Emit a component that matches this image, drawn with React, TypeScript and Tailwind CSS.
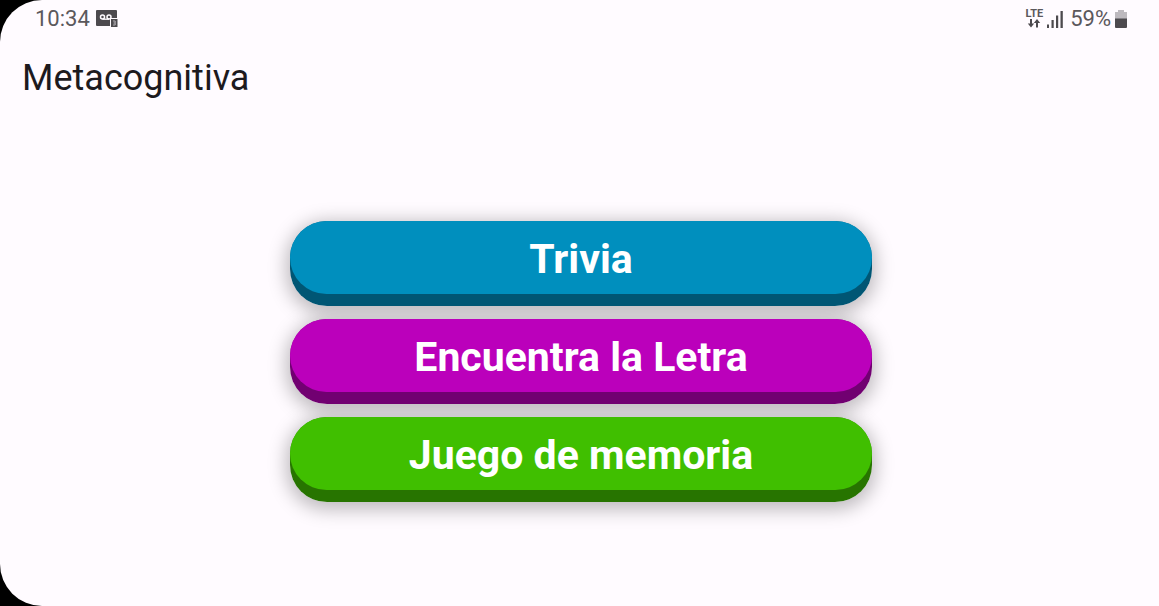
import React from 'react';

const games = [
  { name: 'Trivia', face: 'bg-[#008fbe]', edge: 'bg-[#005674]' },
  { name: 'Encuentra la Letra', face: 'bg-[#bb00bb]', edge: 'bg-[#710071]' },
  { name: 'Juego de memoria', face: 'bg-[#40bf00]', edge: 'bg-[#277400]' },
];

const VoicemailIcon = () => (
  <svg width="22" height="19" viewBox="0 0 22 19" aria-hidden="true">
    <path d="M1 1h19a1 1 0 0 1 1 1v7h-5v8H1a1 1 0 0 1-1-1V2a1 1 0 0 1 1-1z" fill="#4d4a4e" />
    <circle cx="6.500" cy="8" r="2" fill="none" stroke="#fffbff" strokeWidth="1.500" />
    <circle cx="13" cy="8" r="2" fill="none" stroke="#fffbff" strokeWidth="1.500" />
    <path d="M6.500 10.200h6.500" stroke="#fffbff" strokeWidth="1.300" />
    <path d="M14 9h8v10h-8z" fill="#fffbff" />
    <path d="M15 10h6.500v8H15z" fill="#4d4a4e" />
    <path d="M17 12h2.200v4H17M17.500 14h1.500" fill="none" stroke="#bdb9be" strokeWidth="0.900" />
  </svg>
);

const DataArrows = () => (
  <svg width="14" height="9" viewBox="0 0 14 9" fill="#4d4a4e" aria-hidden="true">
    <path d="M3 0h2v4.500h2.200L4 8.500 0.800 4.500H3z" />
    <path d="M9 8.500h2V4h2.200L10 0 6.800 4H9z" />
  </svg>
);

const SignalIcon = () => (
  <svg width="17" height="18" viewBox="0 0 17 18" fill="#4d4a4e" aria-hidden="true">
    <rect x="0" y="14.500" width="2" height="3.500" />
    <rect x="4.500" y="10" width="2.200" height="8" />
    <rect x="9" y="5.500" width="2.200" height="12.500" />
    <rect x="13.500" y="1" width="2.300" height="17" />
  </svg>
);

const BatteryIcon = () => (
  <svg width="12" height="18" viewBox="0 0 12 18" aria-hidden="true">
    <path d="M3 0h6v2h3v7H0V2h3z" fill="#bdb9be" />
    <path d="M0 8.500h12V17a1 1 0 0 1-1 1H1a1 1 0 0 1-1-1z" fill="#4d4a4e" />
  </svg>
);

const App = () => {
  return (
    <div className="min-h-screen bg-black font-['Roboto',sans-serif]">
      <div className="flex min-h-screen flex-col rounded-l-[42px] bg-[#fffbff]">
        {/* Status Bar */}
        <div className="flex h-[37px] items-center justify-between pl-[35px] pr-8 text-[22px] leading-9 text-[#5b585c]">
          <div className="flex items-center gap-1.5">
            <span>10:34</span>
            <VoicemailIcon />
          </div>
          <div className="flex items-center">
            <div className="mr-1 flex flex-col items-center">
              <span className="text-[11px] font-bold leading-[10px]">LTE</span>
              <DataArrows />
            </div>
            <SignalIcon />
            <span className="mx-1.5 mr-1">59%</span>
            <BatteryIcon />
          </div>
        </div>

        {/* App Bar */}
        <header className="flex h-[82px] items-center px-[22px]">
          <h1 className="text-4xl text-[#1d1a1e]">Metacognitiva</h1>
        </header>

        {/* Game Buttons */}
        <main className="flex flex-1 flex-col items-center justify-center pb-0.5 pl-[3px]">
          <div className="isolate flex w-[582px] max-w-full flex-col gap-[13px]">
            {games.map((game) => (
              <button
                key={game.name}
                type="button"
                className="relative rounded-[37px] before:absolute before:inset-0 before:-z-10 before:rounded-[37px] before:shadow-[0_4px_18px_4px_rgba(0,0,0,0.25)]"
              >
                <span className={`block rounded-[37px] pb-3 ${game.edge}`}>
                  <span className={`flex h-[73px] items-center justify-center rounded-[37px] pt-1 text-[41px] font-bold text-white ${game.face}`}>
                    {game.name}
                  </span>
                </span>
              </button>
            ))}
          </div>
        </main>
      </div>
    </div>
  );
};

export default App;
